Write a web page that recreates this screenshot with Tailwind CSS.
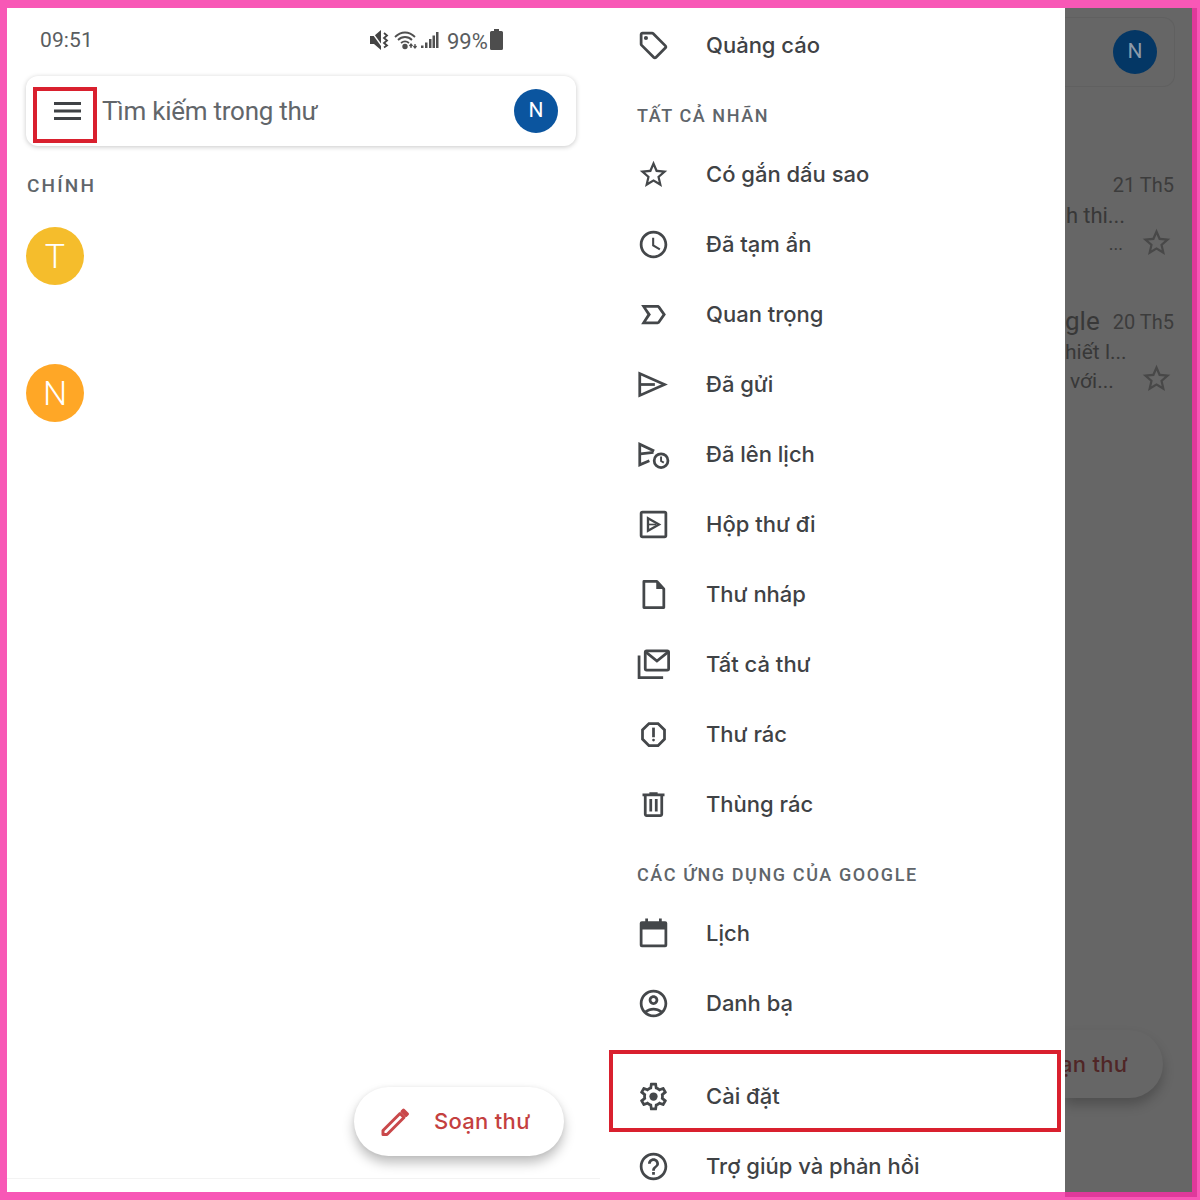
<!DOCTYPE html>
<html lang="vi">
<head>
<meta charset="utf-8">
<script src="https://cdn.jsdelivr.net/npm/@tailwindcss/browser@4"></script>
<title>Gmail</title>
</head>
<body class="m-0">
<div class="w-[1200px] h-[1200px] bg-[#f858b6] pl-[7px] pt-2 pr-[3px] pb-[3px] flex overflow-hidden font-['Roboto',sans-serif]">

  <!-- Left screen -->
  <div class="w-[593px] h-full bg-white border-b-[5px] border-[#f858b6] flex flex-col shrink-0">
    <div class="h-[66px] pl-[33px] flex items-center text-[22px] text-[#5a5d60] relative">
      <span class="w-[329px] text-[21px] tracking-[0.1px]">09:51</span>
      <svg class="w-[20px] h-[22px] -mt-[2px]" viewBox="0 0 20 22" fill="#444"><path d="M1 7h4l7-6v20l-7-6H1z"/><path d="M2 2l13 18" stroke="#fff" stroke-width="1.300"/><path d="M15 4l3 2.500-3 2.500 3 2.500-3 2.500 3 2.500-3 2" fill="none" stroke="#444" stroke-width="1.800"/></svg>
      <svg class="ml-[5px] w-[24px] h-[22px] -mt-[2px]" viewBox="0 0 24 22" fill="none" stroke="#505050" stroke-width="1.800"><path d="M1 8c6-6 14-6 20 0M4 11c4-4 10-4 14 0M7 14c2.500-2 5.500-2 8 0"/><circle cx="11" cy="17.500" r="1.800" fill="#505050"/><path d="M17 15v4M21 19v-4M15.500 17l1.500-2 1.500 2M19.500 17l1.500 2 1.500-2" stroke-width="1.300"/></svg>
      <svg class="ml-[3px] w-[18px] h-[18px] -mt-[2px]" viewBox="0 0 18 18" fill="#505050"><path d="M0 14.500h2.500V17H0zM4 11.500h2.500V17H4zM8 8h2.500v9H8zM11.500 4.500H14V17h-2.500zM15 1h2.500v16H15z"/></svg>
      <span class="ml-[8px] w-[41px]">99%</span>
      <svg class="ml-[2px] w-[13px] h-[21px] -mt-[3px]" viewBox="0 0 13 21" fill="#4d4d4d"><path d="M4 0h5v2h2.500q1.500 0 1.500 1.500V19.500q0 1.500-1.500 1.500h-10Q0 21 0 19.500V3.500Q0 2 1.500 2H4z"/></svg>
    </div>

    <div class="ml-[19px] w-[550px] h-[70px] mt-[2px] rounded-xl bg-white shadow-[0_1px_5px_rgba(0,0,0,0.22)] pl-[7px] pr-[18px] flex items-center shrink-0">
      <div class="w-[64px] h-[56px] mt-[7px] border-4 border-[#d9202e] flex items-center justify-center shrink-0">
        <svg class="w-[27px] h-[20px] ml-[5px] -mt-[7px]" viewBox="0 0 27 20" fill="#3f4245"><path d="M0 1h27v3H0zM0 8.500h27v3H0zM0 16h27v3H0z"/></svg>
      </div>
      <span class="ml-[5px] flex-1 text-[26px] tracking-[-0.25px] text-[#62666a]">Tìm kiếm trong thư</span>
      <div class="w-[44px] h-[44px] rounded-full bg-[#0b559f] text-white text-[21px] flex items-center justify-center">N</div>
    </div>

    <div class="ml-[20px] mt-[28px] text-[19px] leading-[24px] font-medium tracking-[2.2px] text-[#60656a]">CHÍNH</div>

    <div class="ml-[19px] mt-[29px] w-[58px] h-[58px] rounded-full bg-[#f5bd2c] text-white text-[34px] font-light flex items-center justify-center">T</div>
    <div class="ml-[19px] mt-[79px] w-[58px] h-[58px] rounded-full bg-[#ffa726] text-white text-[34px] font-light flex items-center justify-center">N</div>

    <div class="mt-auto ml-[347px] mb-[22px] w-[210px] h-[69px] rounded-full bg-white shadow-[0_7px_12px_rgba(0,0,0,0.25),0_0_4px_rgba(0,0,0,0.06)] flex items-center pl-[26px]">
      <svg class="w-[30px] h-[30px]" viewBox="0 0 30 30" fill="none" stroke="#c9484a" stroke-width="3" stroke-linejoin="round"><path d="M3 23.500 20 6.500l4 4L7 27.500H3z"/><path d="M22 4.500l1.500-1.500 4 4L26 8.500z" fill="#c9484a"/></svg>
      <span class="ml-[24px] text-[22px] tracking-[0.3px] font-[450] text-[#c4403f] font-['Inter',sans-serif]">Soạn thư</span>
    </div>
    <div class="h-[14px] border-t border-[#f3f3f3] shrink-0"></div>
  </div>

  <!-- Drawer -->
  <div class="w-[465px] h-full bg-white border-b-[5px] border-[#f858b6] shrink-0 overflow-hidden pt-[2px] text-[22px] font-[450] text-[#3f4245] font-['Inter',sans-serif]">
    <div class="h-[70px] pl-[37px] flex items-center gap-[36px]">
      <svg class="w-[33px] h-[33px] shrink-0" viewBox="0 0 24 24" fill="#44474a"><path d="M21.41 11.58l-9-9C12.05 2.22 11.55 2 11 2H4c-1.100 0-2 .9-2 2v7c0 .55.22 1.050.59 1.420l9 9c.36.36.86.58 1.410.58s1.050-.22 1.410-.59l7-7c.37-.36.59-.86.59-1.410s-.23-1.060-.59-1.420zM13 20.010L4 11V4h7v-.01l9 9-7 7.020z"/><circle cx="6.500" cy="6.500" r="1.500"/></svg>
      <span>Quảng cáo</span>
    </div>
    <div class="h-[59px] pl-[37px] pb-[13px] flex items-end text-[18px] leading-[20px] font-medium tracking-[1.6px] text-[#60656a] font-['Roboto',sans-serif]">TẤT CẢ NHÃN</div>

    <div class="h-[70px] pl-[37px] flex items-center gap-[36px]">
      <svg class="w-[33px] h-[33px] shrink-0" viewBox="0 0 24 24" fill="#44474a"><path d="M22 9.240l-7.190-.62L12 2 9.190 8.630 2 9.240l5.460 4.730L5.820 21 12 17.270 18.180 21l-1.630-7.030L22 9.240zM12 15.400l-3.760 2.270 1-4.280-3.320-2.880 4.380-.38L12 6.100l1.710 4.040 4.380.38-3.320 2.880 1 4.280L12 15.400z"/></svg>
      <span>Có gắn dấu sao</span>
    </div>
    <div class="h-[70px] pl-[37px] flex items-center gap-[36px]">
      <svg class="w-[33px] h-[33px] shrink-0" viewBox="0 0 24 24" fill="#44474a"><path d="M11.990 2C6.470 2 2 6.480 2 12s4.470 10 9.990 10C17.520 22 22 17.520 22 12S17.520 2 11.990 2zM12 20c-4.420 0-8-3.580-8-8s3.580-8 8-8 8 3.580 8 8-3.580 8-8 8z"/><path d="M12.500 7H11v6l5.250 3.150.75-1.230-4.500-2.670z"/></svg>
      <span>Đã tạm ẩn</span>
    </div>
    <div class="h-[70px] pl-[37px] flex items-center gap-[36px]">
      <svg class="w-[33px] h-[33px] shrink-0" viewBox="0 0 24 24" fill="#44474a"><path d="M15 19H3l4.500-7L3 5h12c.65 0 1.260.31 1.630.84L21 12l-4.370 6.160c-.37.52-.98.84-1.630.84zm-8.400-2H15l3.500-5L15 7H6.600l3.500 5-3.500 5z"/></svg>
      <span>Quan trọng</span>
    </div>
    <div class="h-[70px] pl-[37px] flex items-center gap-[36px]">
      <svg class="w-[33px] h-[33px] shrink-0" viewBox="0 0 24 24" fill="none" stroke="#44474a" stroke-width="2"><path d="M2 4v16l18-8z"/><path d="M2.500 12H13"/></svg>
      <span>Đã gửi</span>
    </div>
    <div class="h-[70px] pl-[37px] flex items-center gap-[36px]">
      <svg class="w-[33px] h-[33px] shrink-0" viewBox="0 0 24 24" fill="none" stroke="#44474a" stroke-width="2"><path d="M12.500 9.500 2 4.500v15l7-3"/><path d="M2.500 11.500 12 10.500"/><circle cx="17.500" cy="16.500" r="5"/><path d="M17.500 13.500v3.200l2 1.200" stroke-width="1.400"/></svg>
      <span>Đã lên lịch</span>
    </div>
    <div class="h-[70px] pl-[37px] flex items-center gap-[36px]">
      <svg class="w-[33px] h-[33px] shrink-0" viewBox="0 0 24 24" fill="none" stroke="#44474a" stroke-width="2"><rect x="3" y="3" width="18" height="18" rx="1"/><path d="M8 7.500v9l8-4.500z" stroke-width="1.700"/><path d="M8.500 12H14" stroke-width="1.200"/></svg>
      <span>Hộp thư đi</span>
    </div>
    <div class="h-[70px] pl-[37px] flex items-center gap-[36px]">
      <svg class="w-[33px] h-[33px] shrink-0" viewBox="0 0 24 24" fill="none" stroke="#44474a" stroke-width="2" stroke-linejoin="round"><path d="M5 2.500h9.500L19.500 8v13.500H5z"/><path d="M14 2.500 19.500 8H14z" fill="#44474a" stroke="none"/></svg>
      <span>Thư nháp</span>
    </div>
    <div class="h-[70px] pl-[37px] flex items-center gap-[36px]">
      <svg class="w-[33px] h-[33px] shrink-0" viewBox="0 0 24 24" fill="none" stroke="#44474a" stroke-width="2"><path d="M1.500 5.500v16H19"/><rect x="6" y="2" width="17" height="14" rx="1"/><path d="m6.500 3 8 6.500 8-6.500"/></svg>
      <span>Tất cả thư</span>
    </div>
    <div class="h-[70px] pl-[37px] flex items-center gap-[36px]">
      <svg class="w-[33px] h-[33px] shrink-0" viewBox="0 0 24 24" fill="#44474a"><path d="M15.730 3H8.270L3 8.270v7.460L8.270 21h7.460L21 15.730V8.270L15.730 3zM19 14.900L14.900 19H9.100L5 14.900V9.100L9.100 5h5.800L19 9.100v5.800z"/><circle cx="12" cy="16" r="1"/><path d="M11 7h2v7h-2z"/></svg>
      <span>Thư rác</span>
    </div>
    <div class="h-[70px] pl-[37px] flex items-center gap-[36px]">
      <svg class="w-[33px] h-[33px] shrink-0" viewBox="0 0 24 24" fill="#44474a"><path d="M15 4V3H9v1H4v2h1v13c0 1.100.9 2 2 2h10c1.100 0 2-.9 2-2V6h1V4h-5zm2 15H7V6h10v13zM9 8h2v9H9zm4 0h2v9h-2z"/></svg>
      <span>Thùng rác</span>
    </div>

    <div class="h-[59px] pl-[37px] pb-[13px] flex items-end text-[18px] leading-[20px] font-medium tracking-[1.6px] text-[#60656a] font-['Roboto',sans-serif]">CÁC ỨNG DỤNG CỦA GOOGLE</div>

    <div class="h-[70px] pl-[37px] flex items-center gap-[36px]">
      <svg class="w-[33px] h-[33px] shrink-0" viewBox="0 0 24 24" fill="#44474a"><path d="M6 1h2v2h8V1h2v2h2.500Q22 3 22 4.500v16q0 1.500-1.500 1.500h-17Q2 22 2 20.500v-16Q2 3 3.500 3H6zM4 9v11h16V9z"/></svg>
      <span>Lịch</span>
    </div>
    <div class="h-[70px] pl-[37px] flex items-center gap-[36px]">
      <svg class="w-[33px] h-[33px] shrink-0" viewBox="0 0 24 24" fill="#44474a"><path d="M12 2C6.480 2 2 6.480 2 12s4.480 10 10 10 10-4.480 10-10S17.520 2 12 2zM7.350 18.500C8.660 17.560 10.260 17 12 17s3.340.56 4.650 1.500C15.340 19.440 13.740 20 12 20s-3.340-.56-4.650-1.500zm10.790-1.380C16.450 15.800 14.320 15 12 15s-4.450.8-6.140 2.120C4.700 15.730 4 13.950 4 12c0-4.420 3.580-8 8-8s8 3.580 8 8c0 1.950-.7 3.730-1.860 5.120z"/><path d="M12 6c-1.930 0-3.500 1.570-3.500 3.500S10.070 13 12 13s3.500-1.570 3.500-3.500S13.930 6 12 6zm0 5c-.83 0-1.500-.67-1.500-1.500S11.170 8 12 8s1.500.67 1.500 1.500S12.830 11 12 11z"/></svg>
      <span>Danh bạ</span>
    </div>

    <div class="mt-[12px] ml-[9px] w-[452px] h-[82px] border-4 border-[#d9202e] pl-[24px] pt-[10px] flex items-center gap-[36px]">
      <svg class="w-[33px] h-[33px] shrink-0" viewBox="0 0 24 24" fill="#44474a"><path d="M19.430 12.980c.04-.32.07-.64.07-.98 0-.34-.03-.66-.07-.98l2.110-1.650c.19-.15.24-.42.12-.64l-2-3.460c-.09-.16-.26-.25-.44-.25-.06 0-.12.01-.17.03l-2.490 1c-.52-.4-1.080-.73-1.690-.98l-.38-2.650C14.460 2.180 14.250 2 14 2h-4c-.25 0-.46.18-.49.42l-.38 2.650c-.61.25-1.170.59-1.690.98l-2.490-1c-.06-.02-.12-.03-.18-.03-.17 0-.34.09-.43.25l-2 3.460c-.13.22-.07.49.12.64l2.110 1.650c-.04.32-.07.65-.07.98 0 .33.03.66.07.98l-2.110 1.650c-.19.15-.24.42-.12.64l2 3.460c.09.16.26.25.44.25.06 0 .12-.01.17-.03l2.490-1c.52.4 1.080.73 1.690.98l.38 2.650c.03.24.24.42.49.42h4c.25 0 .46-.18.49-.42l.38-2.650c.61-.25 1.170-.59 1.690-.98l2.490 1c.06.02.12.03.18.03.17 0 .34-.09.43-.25l2-3.460c.12-.22.07-.49-.12-.64l-2.110-1.650zm-1.980-1.710c.04.31.05.52.05.73 0 .21-.02.43-.05.73l-.14 1.130.89.7 1.080.84-.7 1.210-1.270-.51-1.040-.42-.9.68c-.43.32-.84.56-1.250.73l-1.060.43-.16 1.130-.2 1.350h-1.400l-.19-1.350-.16-1.130-1.060-.43c-.43-.18-.83-.41-1.230-.71l-.91-.7-1.060.43-1.270.51-.7-1.210 1.080-.84.89-.7-.14-1.130c-.03-.31-.05-.54-.05-.74s.02-.43.05-.73l.14-1.130-.89-.7-1.080-.84.7-1.210 1.270.51 1.040.42.9-.68c.43-.32.84-.56 1.250-.73l1.060-.43.16-1.130.2-1.350h1.390l.19 1.350.16 1.130 1.060.43c.43.18.83.41 1.230.71l.91.7 1.060-.43 1.270-.51.7 1.210-1.070.85-.89.7.14 1.130z"/><circle cx="12" cy="12" r="3"/></svg>
      <span>Cài đặt</span>
    </div>

    <div class="h-[68px] pl-[37px] flex items-center gap-[36px]">
      <svg class="w-[33px] h-[33px] shrink-0" viewBox="0 0 24 24" fill="#44474a"><path d="M11 18h2v-2h-2v2zm1-16C6.480 2 2 6.480 2 12s4.480 10 10 10 10-4.480 10-10S17.520 2 12 2zm0 18c-4.410 0-8-3.590-8-8s3.590-8 8-8 8 3.590 8 8-3.590 8-8 8zm0-14c-2.210 0-4 1.790-4 4h2c0-1.100.9-2 2-2s2 .9 2 2c0 2-3 1.750-3 5h2c0-2.250 3-2.500 3-5 0-2.210-1.790-4-4-4z"/></svg>
      <span>Trợ giúp và phản hồi</span>
    </div>
  </div>

  <!-- Scrim over the inbox -->
  <div class="w-[132px] h-full bg-[#666666] border-r-[5px] border-b-[5px] border-[#e0399b] shrink-0 flex flex-col overflow-hidden text-[#383838]">
    <div class="mt-[9px] w-[110px] h-[70px] rounded-r-xl border border-l-0 border-[#606060] flex items-center justify-end pr-[17px] shrink-0">
      <div class="w-[44px] h-[44px] rounded-full bg-[#043765] text-[#8c9aa8] text-[21px] flex items-center justify-center">N</div>
    </div>
    <div class="mt-[83px] h-[30px] pr-[18px] flex items-center justify-end text-[20px] text-[#3c3c3c] shrink-0">21 Th5</div>
    <div class="h-[30px] pl-px flex items-center text-[22px] tracking-[-0.1px] whitespace-nowrap shrink-0">h thi...</div>
    <div class="h-[24px] pr-[19px] flex items-center justify-end gap-[17px] text-[18px] shrink-0">
      <span class="mt-[2px]">...</span>
      <svg class="w-[33px] h-[33px] shrink-0" viewBox="0 0 24 24" fill="#484848"><path d="M22 9.240l-7.190-.62L12 2 9.190 8.630 2 9.240l5.460 4.730L5.820 21 12 17.270 18.180 21l-1.630-7.030L22 9.240zM12 15.400l-3.760 2.270 1-4.280-3.320-2.880 4.380-.38L12 6.100l1.710 4.040 4.380.38-3.320 2.880 1 4.280L12 15.400z"/></svg>
    </div>
    <div class="mt-[50px] h-[34px] pr-[18px] flex items-center justify-between shrink-0">
      <span class="text-[26px]">gle</span>
      <span class="text-[20px] text-[#3c3c3c] mt-[2px]">20 Th5</span>
    </div>
    <div class="h-[29px] flex items-center text-[21px] whitespace-nowrap shrink-0">hiết l...</div>
    <div class="h-[27px] pl-[5px] pr-[19px] flex items-center justify-between text-[21px] shrink-0">
      <span class="mt-[2px]">với...</span>
      <svg class="w-[33px] h-[33px] shrink-0 -mt-1" viewBox="0 0 24 24" fill="#484848"><path d="M22 9.240l-7.190-.62L12 2 9.190 8.630 2 9.240l5.460 4.730L5.820 21 12 17.270 18.180 21l-1.630-7.030L22 9.240zM12 15.400l-3.760 2.270 1-4.280-3.320-2.880 4.380-.38L12 6.100l1.710 4.040 4.380.38-3.320 2.880 1 4.280L12 15.400z"/></svg>
    </div>
    <div class="mt-auto mb-[94px] w-[98px] h-[68px] rounded-r-full shadow-[0_7px_12px_rgba(0,0,0,0.22)] flex items-center shrink-0 overflow-hidden">
      <span class="text-[22px] tracking-[0.3px] font-[450] text-[#502626] font-['Inter',sans-serif] whitespace-nowrap -ml-[5px]">ạn thư</span>
    </div>
  </div>
</div>
</body>
</html>
